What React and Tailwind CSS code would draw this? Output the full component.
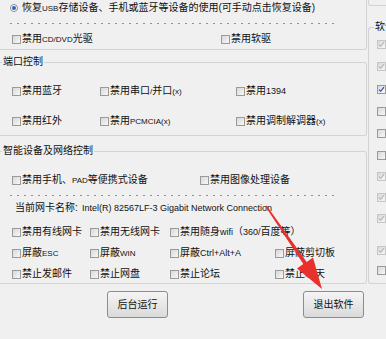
import React from 'react';

const L = ({ children, size = 'text-[8px]' }) => <span className={size}>{children}</span>;

function Box({ state = 'off' }) {
  const dis = state === 'dis';
  return (
    <span
      className={`flex h-[9px] w-[9px] shrink-0 items-center justify-center border bg-linear-to-br from-[#d8d8d8] to-[#f8f8f8] ${
        dis ? 'border-[#c6c6c6]' : 'border-[#9a9a9a]'
      }`}
    >
      {state !== 'off' && (
        <svg width="7" height="7" viewBox="0 0 7 7">
          <path d="M1 3.6 L2.7 5.3 L6 1.2" fill="none" stroke={dis ? '#b3b3b3' : '#2747a0'} strokeWidth="1.1" />
        </svg>
      )}
    </span>
  );
}

function Check({ label, w = '', state = 'off' }) {
  return (
    <div className={`flex items-center gap-[1px] whitespace-nowrap ${w}`}>
      <Box state={state} />
      <span>{label}</span>
    </div>
  );
}

const Dashed = ({ mt }) => (
  <div className={`ml-[10px] h-px w-[326px] bg-[repeating-linear-gradient(90deg,#909090_0_2px,transparent_2px_7px)] ${mt}`} />
);

const rightItems = [
  { mt: 'mt-[2px]', state: 'dis', label: '禁止修改系统时间' },
  { mt: 'mt-[6px]', state: 'dis', label: '禁止修改注册表' },
  { mt: 'mt-[7px]', state: 'on', label: '禁止任务管理器' },
  { mt: 'mt-[6px]', state: 'off', label: '禁止命令提示符' },
  { mt: 'mt-[6px]', state: 'off', label: '禁止组策略' },
  { mt: 'mt-[6px]', state: 'off', label: '禁止控制面板' },
  { mt: 'mt-[5px]', state: 'dis', label: '禁止设备管理器' },
  { mt: 'mt-[5px]', state: 'dis', label: '禁止计算机管理' },
  { mt: 'mt-[5px]', state: 'dis', label: '禁止修改IP' },
  { mt: 'mt-[16px]', state: 'dis', label: '禁止安装软件' },
  { mt: 'mt-[4px]', state: 'off', label: '禁止卸载软件' },
];

export default function App() {
  return (
    <div className="relative flex h-[339px] w-[386px] overflow-hidden bg-[#f0f0f0] font-['Liberation_Sans','Noto_Sans_CJK_SC',sans-serif] text-[10px] leading-[14px] text-[#111]">
      {/* left column */}
      <div className="flex w-[367px] shrink-0 flex-col">
        <div className="h-[50px] rounded-br-[3px] border-r border-b border-[#d3d3d3]">
          <div className="flex h-[16px] items-center gap-[4px] pl-[10px] whitespace-nowrap">
            <span className="flex h-[8px] w-[8px] items-center justify-center rounded-full border border-[#8a8a8a] bg-white">
              <span className="h-[4px] w-[4px] rounded-full bg-[#2b62c0]" />
            </span>
            <span>
              恢复<L>USB</L>存储设备、手机或蓝牙等设备的使用(可手动点击恢复设备)
            </span>
          </div>
          <Dashed mt="mt-[7px]" />
          <div className="mt-[7px] flex h-[16px] items-center pl-[12px]">
            <Check w="w-[209px]" label={<>禁用<L>CD/DVD</L>光驱</>} />
            <Check label="禁用软驱" />
          </div>
        </div>

        <fieldset className="mt-[5px] h-[81px] rounded-r-[3px] border border-l-0 border-[#d3d3d3]">
          <legend className="ml-[2px] px-[1px] leading-[14px]">端口控制</legend>
          <div className="mt-[14px] flex h-[16px] items-center pl-[12px]">
            <Check w="w-[88px]" label="禁用蓝牙" />
            <Check w="w-[136px]" label={<>禁用串口<L>/</L>并口<L>(x)</L></>} />
            <Check label={<>禁用<L size="text-[9px]">1394</L></>} />
          </div>
          <div className="mt-[14px] flex h-[16px] items-center pl-[12px]">
            <Check w="w-[88px]" label="禁用红外" />
            <Check w="w-[136px]" label={<>禁用<L>PCMCIA(x)</L></>} />
            <Check label={<>禁用调制解调器<L>(x)</L></>} />
          </div>
        </fieldset>

        <fieldset className="mt-[8px] h-[140px] rounded-r-[3px] border border-l-0 border-[#d3d3d3]">
          <legend className="ml-[2px] px-[1px] leading-[14px]">智能设备及网络控制</legend>
          <div className="mt-[14px] flex h-[16px] items-center pl-[12px]">
            <Check w="w-[188px]" label={<>禁用手机、<L>PAD</L>等便携式设备</>} />
            <Check label="禁用图像处理设备" />
          </div>
          <Dashed mt="mt-[7px]" />
          <div className="mt-[4px] flex h-[16px] items-center pl-[15px] whitespace-nowrap">
            <span className="w-[67px]">当前网卡名称:</span>
            <span className="text-[9px]">Intel(R) 82567LF-3 Gigabit Network Connection</span>
          </div>
          <div className="mt-[8px] flex h-[16px] items-center pl-[12px]">
            <Check w="w-[78px]" label="禁用有线网卡" />
            <Check w="w-[80px]" label="禁用无线网卡" />
            <Check label={<>禁用随身<L size="text-[9px]">wifi</L>（<L size="text-[9px]">360/</L>百度等）</>} />
          </div>
          <div className="mt-[5px] flex h-[16px] items-center pl-[12px]">
            <Check w="w-[78px]" label={<>屏蔽<L>ESC</L></>} />
            <Check w="w-[80px]" label={<>屏蔽<L>WIN</L></>} />
            <Check w="w-[105px]" label={<>屏蔽<L size="text-[9px]">Ctrl+Alt+A</L></>} />
            <Check label="屏蔽剪切板" />
          </div>
          <div className="mt-[5px] flex h-[16px] items-center pl-[12px]">
            <Check w="w-[78px]" label="禁止发邮件" />
            <Check w="w-[80px]" label="禁止网盘" />
            <Check w="w-[105px]" label="禁止论坛" />
            <Check label="禁止聊天" />
          </div>
        </fieldset>

        <div className="mt-[7px] flex">
          <button className="ml-[107px] h-[27px] w-[61px] rounded-[3px] border border-[#8c8c8c] bg-linear-to-b from-[#f5f5f5] to-[#dadada] text-[10px]">
            后台运行
          </button>
          <button className="ml-[135px] h-[27px] w-[61px] rounded-[3px] border border-[#8c8c8c] bg-linear-to-b from-[#f5f5f5] to-[#dadada] text-[10px]">
            退出软件
          </button>
        </div>
      </div>

      {/* right column, cut off by the window */}
      <div className="ml-[1px] flex w-[200px] shrink-0 flex-col">
        <div className="h-[6px] rounded-bl-[3px] border-l border-b border-[#d3d3d3]" />
        <fieldset className="mt-[14px] h-[264px] rounded-l-[3px] border border-r-0 border-[#d3d3d3]">
          <legend className="ml-[5px] px-[1px] leading-[14px]">软件设置</legend>
          {rightItems.map((it, i) => (
            <div key={i} className={`flex h-[16px] items-center pl-[8px] ${it.mt}`}>
              <Check state={it.state} label={it.label} />
            </div>
          ))}
        </fieldset>
      </div>

      {/* red annotation arrow */}
      <svg className="pointer-events-none absolute inset-0" width="386" height="339" viewBox="0 0 386 339">
        <polygon
          points="265.4,206.4 266.6,205.6 306.7,261.9 313,257.5 322,289 297,268.5 303.3,264.1"
          fill="#e8302c"
        />
      </svg>
    </div>
  );
}
